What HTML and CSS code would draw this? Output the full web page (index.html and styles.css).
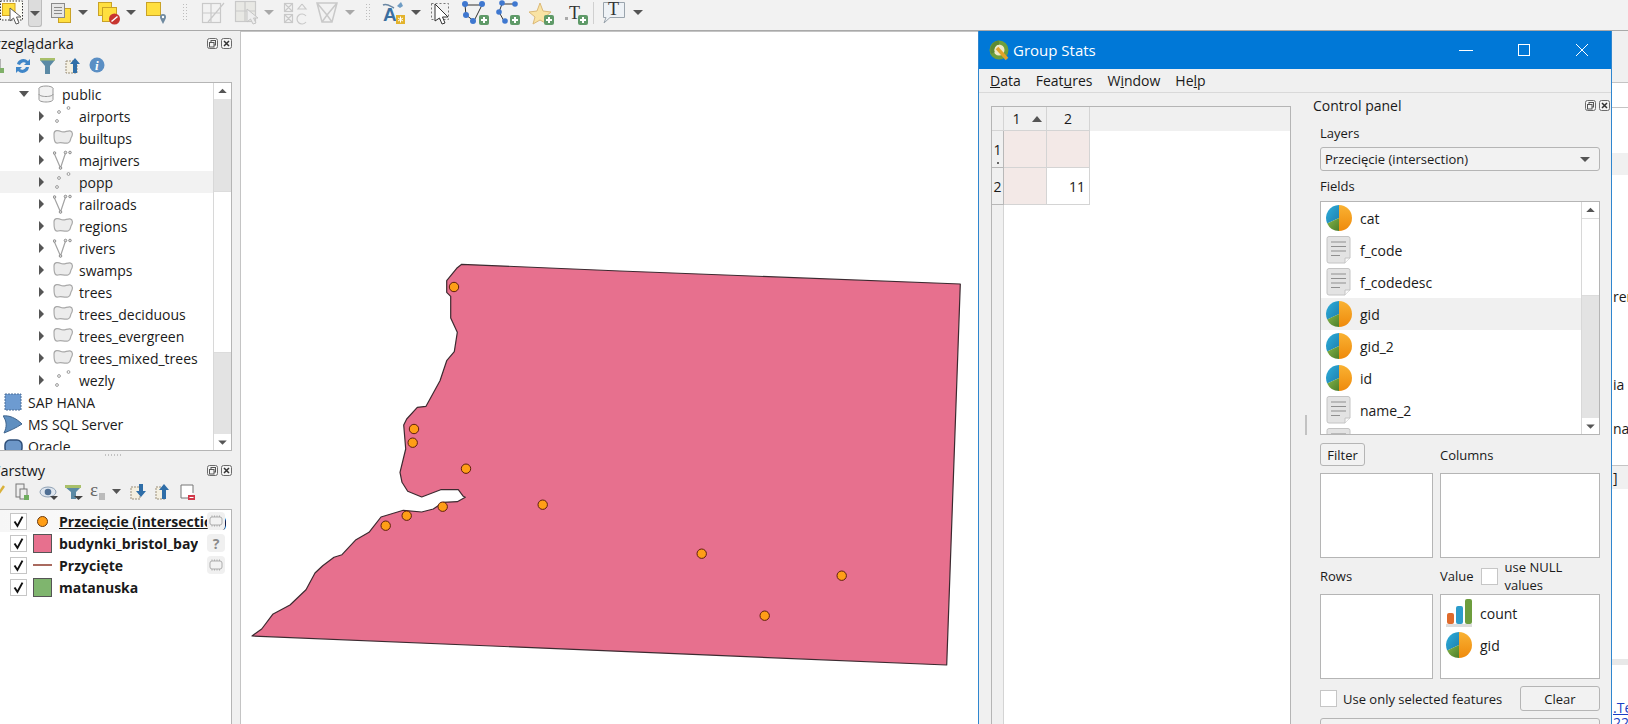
FILE: index.html
```html
<!DOCTYPE html>
<html lang="en">
<head>
    <meta charset="UTF-8">
    <title>QGIS - Group Stats</title>
    <link rel="stylesheet" href="styles.css">
</head>
<body>
<svg class="defs" width="0" height="0">
    <defs>
        <linearGradient id="gOrange" x1="0" y1="0" x2="0" y2="1"><stop offset="0" stop-color="#f9b233"/><stop offset="1" stop-color="#ef8a0c"/></linearGradient>
        <linearGradient id="gBlue" x1="0" y1="0" x2="1" y2="1"><stop offset="0" stop-color="#2db0dd"/><stop offset="1" stop-color="#1f7fae"/></linearGradient>
        <linearGradient id="gGreen" x1="0" y1="0" x2="1" y2="1"><stop offset="0" stop-color="#86b548"/><stop offset="1" stop-color="#4d7f2c"/></linearGradient>
        <symbol id="pie" viewBox="0 0 26 26">
            <path d="M13 13V0A13 13 0 0 1 13 26Z" fill="url(#gOrange)"/>
            <path d="M13 13V0A13 13 0 0 0 1.2 18.4Z" fill="url(#gBlue)"/>
            <path d="M13 13L1.2 18.4A13 13 0 0 0 13 26Z" fill="url(#gGreen)"/>
        </symbol>
        <symbol id="doc" viewBox="0 0 26 28">
            <path d="M3 .5H22a2 2 0 0 1 2 2V22l-5 5H3a2 2 0 0 1-2-2V2.5a2 2 0 0 1 2-2Z" fill="#e3e3e3" stroke="#c4c4c4"/>
            <path d="M19 27v-5h5" fill="#fafafa" stroke="#c4c4c4"/>
            <path d="M5 6H20M5 10.500H20M5 15H20M5 19.500H14" stroke="#8f8f8f" fill="none"/>
        </symbol>
        <symbol id="blob" viewBox="0 0 20 20">
            <path d="M1 6C1 2 5 2 8 3.500C11 5 14 2.500 17 2.800C20 3.500 20 7 18 10C17 12 18 14 15 15C11 16 8 13.500 5 15C1 16 1 10 1 6Z" fill="#ececec" stroke="#a9a9a9" stroke-width="1.200"/>
        </symbol>
        <symbol id="pts" viewBox="0 0 20 20">
            <g fill="#fff" stroke="#9a9a9a" stroke-width="1"><circle cx="15.500" cy="2" r="1.400"/><circle cx="6" cy="6" r="1.400"/><circle cx="4" cy="15" r="1.400"/></g>
        </symbol>
        <symbol id="lin" viewBox="0 0 20 20">
            <path d="M1 3L7.500 18L12.500 3" fill="none" stroke="#a3a3a3" stroke-width="1.200"/>
            <g fill="#ddd" stroke="#8f8f8f"><circle cx="1.500" cy="3" r="1.300"/><circle cx="7.500" cy="18" r="1.300"/><circle cx="12.500" cy="2.500" r="1.300"/><circle cx="17" cy="2.500" r="1.300"/></g>
        </symbol>
        <symbol id="chip" viewBox="0 0 18 18">
            <rect x="3" y="5" width="12" height="8" rx="2" fill="#f2f2f2" stroke="#adadad"/>
            <path d="M5 3.500V5M7.500 3.500V5M10 3.500V5M12.500 3.500V5M5 13V14.500M7.500 13V14.500M10 13V14.500M12.500 13V14.500" stroke="#adadad"/>
        </symbol>
        <symbol id="check" viewBox="0 0 17 17">
            <path d="M4 8.500L7.300 13.500L13 3" fill="none" stroke="#111" stroke-width="2.200"/>
        </symbol>
        <symbol id="floatbtn" viewBox="0 0 11 11">
            <rect x=".5" y=".5" width="10" height="10" rx="2" fill="#f4f4f4" stroke="#6b6b6b"/>
            <rect x="4" y="2.500" width="4.500" height="4.500" fill="none" stroke="#555"/><rect x="2.500" y="4.500" width="4.500" height="4.500" fill="#f4f4f4" stroke="#555"/>
        </symbol>
        <symbol id="closebtn" viewBox="0 0 11 11">
            <rect x=".5" y=".5" width="10" height="10" rx="2" fill="#f4f4f4" stroke="#6b6b6b"/>
            <path d="M3 3L8 8M8 3L3 8" stroke="#333" stroke-width="1.500"/>
        </symbol>
        <symbol id="up" viewBox="0 0 17 17"><path d="M4 10.500H13L8.500 6Z" fill="#555"/></symbol>
        <symbol id="down" viewBox="0 0 17 17"><path d="M4 7H13L8.500 11.500Z" fill="#555"/></symbol>
        <symbol id="plus" viewBox="0 0 10 10"><rect width="10" height="10" rx="2" fill="#5f9a68"/><path d="M5 2V8M2 5H8" stroke="#fff" stroke-width="2"/></symbol>
    </defs>
</svg>

<div class="app">
    <div class="toolbar">
        <svg width="28" height="30" viewBox="0 0 28 30">
            <rect x=".5" y="1" width="22" height="19" fill="#fbfbf4" stroke="#333" stroke-dasharray="1.500 1.500"/>
            <rect x="2.500" y="3.500" width="12.500" height="12" fill="#ffdf3f" stroke="#d3a41f"/>
            <path d="M10 8V21L13.500 18L16 24L19 23L16.500 17L21 17Z" fill="#fff" stroke="#5a5a5a"/>
        </svg>
        <div class="tool-drop"><span class="arrow-down"></span></div>
        <svg width="134" height="30" viewBox="42 0 134 30">
            <rect x="58.500" y="8.500" width="12" height="14" fill="#ffdf3f" stroke="#c9a227"/>
            <rect x="51.500" y="3.500" width="13" height="14" fill="#e6e6e6" stroke="#8a8a8a"/>
            <path d="M54 7.500H62M54 10.500H62M54 13.500H62" stroke="#8a8a8a"/>
            <polygon points="78,10 88,10 83,15" fill="#555"/>
            <rect x="98.500" y="2.500" width="13" height="13" fill="#ffdf3f" stroke="#c9a227"/>
            <rect x="102.500" y="7.500" width="14" height="14" fill="#ffdf3f" stroke="#c9a227"/>
            <circle cx="114.500" cy="19" r="5.500" fill="#c8352f"/>
            <path d="M111.500 21.500L117.500 16.500" stroke="#fff" stroke-width="1.500"/>
            <polygon points="126,10 136,10 131,15" fill="#555"/>
            <rect x="146.500" y="2.500" width="14" height="13" fill="#ffdf3f" stroke="#c9a227"/>
            <path d="M163 24C161 20 160 18.500 160 17A3 3 0 0 1 166 17C166 18.500 165 20 163 24Z" fill="#6f8aa0"/>
            <circle cx="163" cy="17" r="1.200" fill="#fff"/>
        </svg>
        <span class="grip"></span>
        <svg width="166" height="30" viewBox="190 0 166 30">
            <g fill="none" stroke="#c9c9c9" stroke-width="1.200">
                <rect x="196.500" y="3.500" width="18" height="19"/><path d="M196.500 13H214M205 3.500V22M202 22L218 3"/>
                <rect x="229.500" y="1.500" width="20" height="20" fill="#e8e8e4"/><path d="M229.500 11H249M239 1.500V21"/>
                <rect x="278.500" y="3.500" width="8" height="8"/><rect x="278.500" y="14.500" width="8" height="8"/>
                <path d="M279 4L286 11M286 4L279 11M279 15L286 22M286 15L279 22M296 4L292 9H300L296 4M300 16A5 5 0 1 0 300 22"/>
                <path d="M311 3H331L326 22H316ZM311 3L321 15L331 3M316 22L321 15L326 22" stroke-width="1.500"/>
            </g>
            <path d="M241 9V22L244.500 19L247 24L250 23L247.500 18L252 18Z" fill="#eee" stroke="#c4c4c4"/>
            <polygon points="258,10 268,10 263,15" fill="#a8a8a8"/>
            <polygon points="339,10 349,10 344,15" fill="#a8a8a8"/>
        </svg>
        <span class="grip grip-b"></span>
        <svg width="214" height="30" viewBox="370 0 214 30">
            <path d="M377 5C381 3 384 6 388 8" fill="none" stroke="#6b87a3" stroke-width="1.500"/>
            <polygon points="395,2 397,6 394,8 391,6" fill="#6f9cc4"/>
            <text class="tb-a" x="377" y="21">A</text>
            <rect x="390" y="15" width="9" height="9" fill="#e3b32c"/><path d="M394.500 16.500V22.500M392 18L397 21M397 18L392 21" stroke="#fff"/>
            <polygon points="405,10 415,10 410,15" fill="#555"/>
            <rect x="425.500" y="3.500" width="17" height="16" fill="none" stroke="#777" stroke-dasharray="2 2"/>
            <path d="M429 4V21L433.500 18L436 24L439 23L436.500 17L442 17Z" fill="#fff" stroke="#333"/>
            <path d="M459 5H476L468 21L460 15Z" fill="none" stroke="#333" stroke-width="1"/>
            <g fill="#3f78d0"><circle cx="459" cy="4" r="3"/><circle cx="476" cy="4" r="3"/><circle cx="467" cy="21" r="3"/><circle cx="460" cy="15" r="3"/></g>
            <use href="#plus" x="472" y="15" width="12" height="10"/>
            <path d="M496 4H509M496 4L493 12L498 21" fill="none" stroke="#333"/>
            <g fill="#3f78d0"><circle cx="496" cy="3" r="2.800"/><circle cx="509" cy="4" r="2.800"/><circle cx="493" cy="12" r="2.800"/><circle cx="499" cy="21" r="2.800"/></g>
            <use href="#plus" x="504" y="15" width="10" height="10"/>
            <polygon points="534,3 537,11 545,12 539,17 541,24 534,20 527,24 529,17 523,12 531,11" fill="#f9e3a4" stroke="#dcb977"/>
            <use href="#plus" x="538" y="15" width="10" height="10"/>
            <rect x="559" y="17" width="3" height="3" fill="#aaa"/>
            <text class="tb-t" x="563" y="19">T</text>
            <use href="#plus" x="572" y="15" width="10" height="10"/>
        </svg>
        <span class="tb-sep"></span>
        <svg width="50" height="30" viewBox="592 0 50 30">
            <path d="M597.500 2.500H618.500V17.500H604L598 23L600 17.500H597.500Z" fill="#eef2f6" stroke="#9aa4ad"/>
            <text class="tb-t" x="602" y="15">T</text>
            <polygon points="627,10 637,10 632,15" fill="#555"/>
        </svg>
    </div>

    <div class="main">
        <div class="side">
            <div class="dock-title">
                <span class="clip-title browser">Przeglądarka</span>
                <span class="dock-btns"><svg><use href="#floatbtn"/></svg><svg><use href="#closebtn"/></svg></span>
            </div>
            <svg class="dock-tools" width="120" height="22" viewBox="0 55 120 22">
                <path d="M0 60V72H4" fill="none" stroke="#777"/><rect x="0" y="69" width="4" height="5" fill="#7fb069"/>
                <path d="M17 65A6.500 6.500 0 0 1 28 62L30 60V66H24L26 64A4 4 0 0 0 20 66ZM29 68A6.500 6.500 0 0 1 18 72L16 74V68H22L20 70A4 4 0 0 0 26 68Z" fill="#3f86c8"/>
                <path d="M40 59H55V61L50 67V75H45V67L40 61Z" fill="#5b8aa5"/><path d="M40 59H55V61.500H40Z" fill="#a9c06a"/>
                <rect x="66" y="62" width="11" height="12" fill="#f4efe0" stroke="#9a8f7a" stroke-dasharray="2 1"/>
                <path d="M75 59L80 65H77V74H73V65H70Z" fill="#2f6ea8"/>
                <circle cx="97" cy="66" r="7.500" fill="#5b8fc4"/><text class="tb-i" x="95" y="70.500">i</text>
            </svg>
            <div class="panel-box tree-box">
                <div class="tree">
                    <div class="row lvl1"><span class="arrow-open"></span><svg class="db-ico" width="16" height="18" viewBox="0 0 16 18"><ellipse cx="8" cy="3.500" rx="7" ry="2.500" fill="#f2f2f2" stroke="#999"/><path d="M1 3.500V14.500C1 16 4 17 8 17S15 16 15 14.500V3.500M1 9C1 10.500 4 11.500 8 11.500S15 10.500 15 9" fill="#f2f2f2" stroke="#999"/></svg><span>public</span></div>
                    <div class="row lvl2"><span class="arrow-closed"></span><svg class="tree-ico"><use href="#pts"/></svg><span>airports</span></div>
                    <div class="row lvl2"><span class="arrow-closed"></span><svg class="tree-ico"><use href="#blob"/></svg><span>builtups</span></div>
                    <div class="row lvl2"><span class="arrow-closed"></span><svg class="tree-ico"><use href="#lin"/></svg><span>majrivers</span></div>
                    <div class="row lvl2 row-hover"><span class="arrow-closed"></span><svg class="tree-ico"><use href="#pts"/></svg><span>popp</span></div>
                    <div class="row lvl2"><span class="arrow-closed"></span><svg class="tree-ico"><use href="#lin"/></svg><span>railroads</span></div>
                    <div class="row lvl2"><span class="arrow-closed"></span><svg class="tree-ico"><use href="#blob"/></svg><span>regions</span></div>
                    <div class="row lvl2"><span class="arrow-closed"></span><svg class="tree-ico"><use href="#lin"/></svg><span>rivers</span></div>
                    <div class="row lvl2"><span class="arrow-closed"></span><svg class="tree-ico"><use href="#blob"/></svg><span>swamps</span></div>
                    <div class="row lvl2"><span class="arrow-closed"></span><svg class="tree-ico"><use href="#blob"/></svg><span>trees</span></div>
                    <div class="row lvl2"><span class="arrow-closed"></span><svg class="tree-ico"><use href="#blob"/></svg><span>trees_deciduous</span></div>
                    <div class="row lvl2"><span class="arrow-closed"></span><svg class="tree-ico"><use href="#blob"/></svg><span>trees_evergreen</span></div>
                    <div class="row lvl2"><span class="arrow-closed"></span><svg class="tree-ico"><use href="#blob"/></svg><span>trees_mixed_trees</span></div>
                    <div class="row lvl2"><span class="arrow-closed"></span><svg class="tree-ico"><use href="#pts"/></svg><span>wezly</span></div>
                    <div class="row lvl0"><svg class="tree-ico"><rect x="2" y="2" width="16" height="16" fill="#6d9bd1" stroke="#4d6f99" stroke-dasharray="2 1"/></svg><span>SAP HANA</span></div>
                    <div class="row lvl0"><svg class="tree-ico"><path d="M0 2C6 1 13 4 19 10C13 14 6 17 1 19C4 13 4 7 0 2Z" fill="#5f8fc0" stroke="#3f648c"/></svg><span>MS SQL Server</span></div>
                    <div class="row lvl0"><svg class="tree-ico"><rect x="2" y="4" width="17" height="13" rx="5" fill="#6d97c8" stroke="#2f4f78" stroke-width="1.500"/></svg><span>Oracle</span></div>
                </div>
                <div class="sbar">
                    <svg class="sbar-btn"><use href="#up"/></svg>
                    <div class="sbar-groove tree-g1"></div>
                    <div class="sbar-thumb tree-thumb"></div>
                    <div class="sbar-groove tree-g2"></div>
                    <svg class="sbar-btn"><use href="#down"/></svg>
                </div>
            </div>
            <div class="side-split"><span class="dots-h"></span></div>
            <div class="dock-title">
                <span class="clip-title layers">Warstwy</span>
                <span class="dock-btns"><svg><use href="#floatbtn"/></svg><svg><use href="#closebtn"/></svg></span>
            </div>
            <svg class="dock-tools" width="200" height="22" viewBox="0 482 200 22">
                <path d="M-1 494L4 487" stroke="#d9b13a" stroke-width="2.500"/>
                <rect x="16" y="485" width="8" height="13" fill="#eee" stroke="#777"/><rect x="20" y="490" width="7" height="10" fill="#eee" stroke="#777"/><rect x="24" y="496" width="5" height="5" fill="#6fae5f"/>
                <ellipse cx="48" cy="493" rx="8" ry="5" fill="#dfe6ee" stroke="#8ea0b4"/><circle cx="48" cy="493" r="3.300" fill="#4f6f94"/><polygon points="50,497 58,497 54,501" fill="#444"/>
                <path d="M65 486H81V488L76 493V500H71V493L65 488Z" fill="#5b8aa5"/><path d="M65 486H81V489H65Z" fill="#a9c06a"/><polygon points="74,497 83,497 78.500,501" fill="#444"/>
                <text class="tb-e" x="90" y="497">ε</text><rect x="99" y="494" width="6" height="7" fill="#bbb"/>
                <polygon points="112,490 121,490 116.500,495" fill="#555"/>
                <rect x="131" y="488" width="9" height="12" fill="#f4efe0" stroke="#9a8f7a" stroke-dasharray="2 1"/><path d="M141 498L146 492H143V485H139V492H136Z" fill="#2f6ea8"/>
                <rect x="156" y="488" width="9" height="12" fill="#f4efe0" stroke="#9a8f7a" stroke-dasharray="2 1"/><path d="M164 485L169 491H166V500H162V491H159Z" fill="#2f6ea8"/>
                <path d="M189 499H181V486H193V494" fill="#fff" stroke="#777"/><rect x="188" y="496" width="7" height="5" fill="#d2394a"/><path d="M189.500 498.500H193.500" stroke="#fff"/>
            </svg>
            <div class="panel-box layer-box">
                <div class="layer-row layer-sel">
                    <span class="check"><svg><use href="#check"/></svg></span>
                    <span class="sym"><span class="sym-point"></span></span>
                    <span class="layer-name layer-active">Przecięcie (intersection)</span>
                    <span class="badge"><svg><use href="#chip"/></svg></span>
                </div>
                <div class="layer-row">
                    <span class="check"><svg><use href="#check"/></svg></span>
                    <span class="sym"><span class="sym-fill sym-pink"></span></span>
                    <span class="layer-name">budynki_bristol_bay</span>
                    <span class="badge badge-q">?</span>
                </div>
                <div class="layer-row">
                    <span class="check"><svg><use href="#check"/></svg></span>
                    <span class="sym"><span class="sym-line"></span></span>
                    <span class="layer-name">Przycięte</span>
                    <span class="badge"><svg><use href="#chip"/></svg></span>
                </div>
                <div class="layer-row">
                    <span class="check"><svg><use href="#check"/></svg></span>
                    <span class="sym"><span class="sym-fill sym-green"></span></span>
                    <span class="layer-name">matanuska</span>
                </div>
            </div>
        </div>

        <div class="map">
            <svg class="map-svg" width="737" height="691" viewBox="241 33 737 691">
                <polygon class="region" points="461.700,265.300 620,272 960.300,285 946.700,666 252,637 261.700,630 272.700,615.300 290,606 306,590.700 315,574 322.700,566.700 334,558.300 342,555.700 356,540.700 369,533.300 381,518 403.300,511.300 421.700,513 433.300,510 443.300,503.300 457.300,502.700 465.300,498.300 463.300,497.300 458.300,490.700 440.700,490.700 421.700,498 407.700,492.300 402,483.300 400,473.300 405.700,450 403.700,426 406.700,420 417.300,408.300 426,407.300 440,381.700 446.700,361.700 454.300,352.700 457.300,333.300 450.700,319 450.700,297.300 446.700,293.300 446.700,281.700 456.700,269.300"/>
                <g class="pts">
                    <circle cx="454" cy="288" r="4.700"/>
                    <circle cx="414" cy="430" r="4.700"/>
                    <circle cx="412.700" cy="443.700" r="4.700"/>
                    <circle cx="466" cy="469.700" r="4.700"/>
                    <circle cx="442.700" cy="507.700" r="4.700"/>
                    <circle cx="406.700" cy="516.700" r="4.700"/>
                    <circle cx="385.700" cy="526.700" r="4.700"/>
                    <circle cx="542.700" cy="505.700" r="4.700"/>
                    <circle cx="701.700" cy="554.700" r="4.700"/>
                    <circle cx="841.700" cy="576.700" r="4.700"/>
                    <circle cx="764.700" cy="616.700" r="4.700"/>
                </g>
            </svg>
        </div>
    </div>

    <!-- window behind Group Stats, only its left edge shows -->
    <div class="behind">
        <div class="behind-top"></div>
        <div class="behind-gap1"></div>
        <div class="behind-band"></div>
        <div class="behind-text t-ren">ren</div>
        <div class="behind-text t-ia">ia</div>
        <div class="behind-text t-na">na</div>
        <div class="behind-head">]</div>
        <div class="behind-band2"></div>
        <a class="behind-link">.Te</a>
        <a class="behind-link">22:</a>
    </div>

    <div class="win">
        <div class="win-title">
            <svg class="q-logo" width="21" height="21" viewBox="0 0 21 21">
                <circle cx="10" cy="10" r="7.500" fill="#eee9c8" stroke="#6f9f3a" stroke-width="4"/>
                <path d="M8 8L18 19" stroke="#e0a32a" stroke-width="3.500"/>
                <path d="M4 13A7.500 7.500 0 0 1 10 2.500" fill="none" stroke="#5d8a34" stroke-width="4"/>
            </svg>
            <span class="win-name">Group Stats</span>
            <span class="win-btn"><svg width="14" height="14" viewBox="0 0 14 14"><path d="M0 7.500H14" stroke="#fff"/></svg></span>
            <span class="win-btn"><svg width="14" height="14" viewBox="0 0 14 14"><rect x="1.500" y="1.500" width="11" height="11" fill="none" stroke="#fff"/></svg></span>
            <span class="win-btn"><svg width="14" height="14" viewBox="0 0 14 14"><path d="M1 1L13 13M13 1L1 13" stroke="#fff"/></svg></span>
        </div>
        <div class="win-menu">
            <span><u>D</u>ata</span>
            <span>Feat<u>u</u>res</span>
            <span>W<u>i</u>ndow</span>
            <span>He<u>l</u>p</span>
        </div>
        <div class="win-body">
            <div class="table">
                <div class="th corner"></div>
                <div class="th th-sort">1<svg class="sort" width="10" height="6" viewBox="0 0 10 6"><path d="M0 6H10L5 0Z" fill="#555"/></svg></div>
                <div class="th">2</div>
                <div class="th th-fill"></div>
                <div class="rh">1<span class="rh-mark"></span></div>
                <div class="td td-pink"></div>
                <div class="td td-pink"></div>
                <div class="td-blank"></div>
                <div class="rh">2</div>
                <div class="td td-pink"></div>
                <div class="td">11</div>
                <div class="td-blank"></div>
                <div class="rh-rest"></div>
                <div class="td-rest"></div>
            </div>
            <div class="win-split"><span class="dots-v"></span></div>
            <div class="control">
                <div class="control-head">
                    <span>Control panel</span>
                    <span class="dock-btns"><svg><use href="#floatbtn"/></svg><svg><use href="#closebtn"/></svg></span>
                </div>
                <div class="form">
                    <div class="lbl lbl-layers">Layers</div>
                    <div class="combo"><span>Przecięcie (intersection)</span><span class="arrow-down"></span></div>
                    <div class="lbl lbl-fields">Fields</div>
                    <div class="fields">
                        <div class="field-list">
                            <div class="field"><svg class="field-ico"><use href="#pie"/></svg>cat</div>
                            <div class="field"><svg class="field-ico"><use href="#doc"/></svg>f_code</div>
                            <div class="field"><svg class="field-ico"><use href="#doc"/></svg>f_codedesc</div>
                            <div class="field field-hover"><svg class="field-ico"><use href="#pie"/></svg>gid</div>
                            <div class="field"><svg class="field-ico"><use href="#pie"/></svg>gid_2</div>
                            <div class="field"><svg class="field-ico"><use href="#pie"/></svg>id</div>
                            <div class="field"><svg class="field-ico"><use href="#doc"/></svg>name_2</div>
                            <div class="field"><svg class="field-ico"><use href="#doc"/></svg>name_3</div>
                        </div>
                        <div class="sbar">
                            <svg class="sbar-btn"><use href="#up"/></svg>
                            <div class="sbar-thumb field-thumb"></div>
                            <div class="sbar-groove field-g"></div>
                            <svg class="sbar-btn"><use href="#down"/></svg>
                        </div>
                    </div>
                    <div class="pivot">
                        <div class="pivot-head"><span class="btn-filter">Filter</span></div>
                        <div class="pivot-head"><span>Columns</span></div>
                        <div class="dropbox"></div>
                        <div class="dropbox"></div>
                        <div class="pivot-head pivot-mid"><span>Rows</span></div>
                        <div class="pivot-head pivot-mid value-head"><span>Value</span><span class="box-check"></span><span>use NULL values</span></div>
                        <div class="dropbox"></div>
                        <div class="dropbox value-box">
                            <div class="value-item">
                                <svg width="26" height="28" viewBox="0 0 26 28"><rect y="25" width="26" height="3" fill="#ddd"/><rect x="1" y="14" width="7" height="11" rx="2" fill="#df6a2b"/><rect x="10" y="7" width="7" height="18" rx="2" fill="#2c9ccb"/><rect x="19" y="0" width="7" height="25" rx="2" fill="#6d9d3e"/></svg>
                                count
                            </div>
                            <div class="value-item"><svg width="26" height="26"><use href="#pie"/></svg>gid</div>
                        </div>
                    </div>
                    <div class="bottom-row">
                        <span class="box-check"></span>
                        <span class="only-sel">Use only selected features</span>
                        <span class="btn-clear">Clear</span>
                    </div>
                    <div class="combo combo-last"></div>
                </div>
            </div>
        </div>
    </div>
</div>
</body>
</html>
```

FILE: styles.css
```css
html, body {
    margin: 0;
    padding: 0;
    overflow: hidden;
}
body {
    font-family: "Open Sans", sans-serif;
    font-size: 14px;
    color: #1a1a1a;
    background-color: #f0f0f0;
}
.defs {
    display: block;
}
.app {
    position: relative;
    width: 1628px;
    height: 724px;
    overflow: hidden;
    display: flex;
    flex-direction: column;
}

/* main toolbar */
.toolbar {
    height: 30px;
    flex: none;
    display: flex;
    align-items: flex-start;
    border-bottom: 1px solid #a9a9a9;
    background-color: #f2f2f2;
}
.toolbar svg {
    display: block;
    flex: none;
}
.tool-drop {
    width: 14px;
    height: 27px;
    box-sizing: border-box;
    background-color: #dcdcdc;
    border: 1px solid #bcbcbc;
    border-top: none;
    border-radius: 0 0 3px 3px;
    display: flex;
    align-items: center;
    justify-content: center;
}
.arrow-down {
    width: 0;
    height: 0;
    border-left: 5px solid transparent;
    border-right: 5px solid transparent;
    border-top: 5px solid #555;
}
.grip {
    width: 5px;
    height: 19px;
    margin: 3px 9px 0 6px;
    background-image: radial-gradient(#bdbdbd 1px, transparent 1px);
    background-size: 3px 3px;
}
.grip-b {
    margin: 3px 6px 0 3px;
}
.tb-sep {
    width: 1px;
    height: 22px;
    margin: 2px 4px 0 3px;
    background-color: #d0d0d0;
}
.tb-a {
    font-family: "Liberation Sans", sans-serif;
    font-weight: bold;
    font-size: 19px;
    fill: #3c6f9f;
}
.tb-t {
    font-family: "Liberation Serif", serif;
    font-size: 18px;
    fill: #333;
}
.tb-i {
    font-family: "Liberation Serif", serif;
    font-style: italic;
    font-weight: bold;
    font-size: 13px;
    fill: #fff;
}
.tb-e {
    font-family: "Liberation Serif", serif;
    font-size: 19px;
    fill: #666;
}

.main {
    flex: 1;
    display: flex;
    min-height: 0;
}

/* left docks */
.side {
    width: 240px;
    flex: none;
    box-sizing: content-box;
    border-right: 1px solid #c4c4c4;
    padding-top: 1px;
    display: flex;
    flex-direction: column;
    background-color: #f0f0f0;
}
.dock-title {
    height: 22px;
    flex: none;
    display: flex;
    align-items: center;
    justify-content: space-between;
    padding-right: 8px;
    font-size: 14.500px;
}
.clip-title.browser {
    margin-left: -14px;
}
.clip-title.layers {
    margin-left: -13px;
}
.dock-btns {
    display: flex;
    gap: 3px;
}
.dock-btns svg {
    width: 11px;
    height: 11px;
    display: block;
}
.dock-tools {
    flex: none;
    display: block;
    margin-bottom: 6px;
}
.panel-box {
    background-color: #fff;
    border: 1px solid #b5b5b5;
    margin-left: -1px;
    margin-right: 8px;
    display: flex;
}
.tree-box {
    height: 367px;
    flex: none;
    overflow: hidden;
}
.tree {
    flex: 1;
    min-width: 0;
    overflow: hidden;
}
.row {
    height: 22px;
    display: flex;
    align-items: center;
    white-space: nowrap;
}
.row-hover {
    background-color: #f2f2f2;
}
.lvl0 {
    padding-left: 3px;
}
.lvl0 .tree-ico {
    margin-right: 5px;
}
.lvl1 {
    padding-left: 19px;
}
.lvl2 {
    padding-left: 39px;
}
.arrow-open {
    width: 0;
    height: 0;
    border-left: 5px solid transparent;
    border-right: 5px solid transparent;
    border-top: 6px solid #555;
    margin-right: 9px;
}
.arrow-closed {
    width: 0;
    height: 0;
    border-top: 5px solid transparent;
    border-bottom: 5px solid transparent;
    border-left: 5px solid #555;
    margin-right: 9px;
}
.db-ico {
    margin-right: 8px;
    flex: none;
}
.tree-ico {
    width: 20px;
    height: 20px;
    margin-right: 6px;
    flex: none;
}

/* scrollbars */
.sbar {
    width: 17px;
    flex: none;
    display: flex;
    flex-direction: column;
    border-left: 1px solid #d8d8d8;
    background-color: #fff;
}
.sbar-btn {
    width: 17px;
    height: 16px;
    display: block;
    flex: none;
}
.sbar-groove {
    background-color: #e3e3e3;
}
.sbar-thumb {
    background-color: #fff;
    border-top: 1px solid #dcdcdc;
    border-bottom: 1px solid #dcdcdc;
    box-sizing: border-box;
}
.tree-g1 {
    height: 92px;
}
.tree-thumb {
    height: 162px;
}
.tree-g2 {
    height: 81px;
}
.field-thumb {
    height: 78px;
}
.field-g {
    height: 123px;
}

.side-split {
    height: 8px;
    flex: none;
    display: flex;
    justify-content: center;
    align-items: center;
    padding-right: 14px;
}
.dots-h {
    width: 18px;
    height: 2px;
    background-image: radial-gradient(#c2c2c2 1px, transparent 1px);
    background-size: 3px 2px;
}
.layer-box {
    flex: 1;
    flex-direction: column;
    padding-top: 0;
    border-bottom: none;
}
.layer-row {
    height: 22px;
    flex: none;
    display: flex;
    align-items: center;
    position: relative;
    font-weight: bold;
    white-space: nowrap;
}
.layer-sel {
    background: linear-gradient(90deg, #f6f6f6, #fff);
}
.check {
    width: 17px;
    height: 17px;
    box-sizing: border-box;
    margin-left: 10px;
    background-color: #fff;
    border: 1px solid #c6c6c6;
    flex: none;
}
.check svg {
    width: 15px;
    height: 15px;
    display: block;
}
.sym {
    width: 19px;
    height: 19px;
    margin-left: 6px;
    margin-right: 7px;
    display: flex;
    align-items: center;
    justify-content: center;
    flex: none;
}
.sym-point {
    width: 9px;
    height: 9px;
    border-radius: 50%;
    background-color: #ff9e17;
    border: 1px solid #6b3a10;
}
.sym-fill {
    width: 19px;
    height: 19px;
    box-sizing: border-box;
    border: 1px solid #555;
}
.sym-pink {
    background-color: #e7708e;
}
.sym-green {
    background-color: #7fb56e;
}
.sym-line {
    width: 19px;
    height: 2px;
    background-color: #a96a5f;
}
.layer-name {
    max-width: 167px;
    overflow: hidden;
}
.layer-active {
    text-decoration: underline;
}
.badge {
    position: absolute;
    left: 207px;
    top: 2px;
    width: 18px;
    height: 18px;
    background-color: #f0f0f0;
    border-radius: 4px;
    display: flex;
    align-items: center;
    justify-content: center;
    color: #8a8a8a;
}
.badge svg {
    width: 18px;
    height: 18px;
}

/* map canvas */
.map {
    flex: 1;
    background-color: #fff;
    border-top: 1px solid #c4c4c4;
    overflow: hidden;
}
.map-svg {
    display: block;
}
.region {
    fill: #e7708e;
    stroke: #3c2a30;
    stroke-width: 1.200;
    stroke-linejoin: round;
}
.pts circle {
    fill: #ff9e17;
    stroke: #5e1f0c;
    stroke-width: 1;
}

/* other window behind */
.behind {
    position: absolute;
    left: 1611px;
    top: 31px;
    width: 17px;
    height: 693px;
    background-color: #fff;
    padding-left: 2px;
    box-sizing: border-box;
    overflow: hidden;
    white-space: nowrap;
}
.behind > div, .behind > a {
    margin-left: -2px;
    padding-left: 2px;
}
.behind-top {
    height: 51px;
    background-color: #f0f0f0;
    border-bottom: 1px solid #c4c4c4;
}
.behind-gap1 {
    height: 24px;
    border-bottom: 1px solid #c4c4c4;
}
.behind-band {
    height: 22px;
    margin-top: 45px;
    background-color: #f0f0f0;
}
.behind-text {
    height: 20px;
    line-height: 20px;
}
.t-ren {
    margin-top: 112px;
}
.t-ia {
    margin-top: 68px;
}
.t-na {
    margin-top: 24px;
}
.behind-head {
    height: 23px;
    margin-top: 26px;
    line-height: 23px;
    background-color: #f0f0f0;
    border-top: 1px solid #c4c4c4;
}
.behind-band2 {
    height: 6px;
    margin-top: 170px;
    background-color: #e8e8e8;
}
.behind-link {
    display: block;
    margin-top: 35px;
    height: 15px;
    line-height: 15px;
    color: #1a3fc4;
    text-decoration: underline;
}
.behind-link + .behind-link {
    margin-top: 0;
}

/* Group Stats window */
.win {
    position: absolute;
    left: 978px;
    top: 31px;
    width: 634px;
    height: 693px;
    box-sizing: border-box;
    border-left: 1px solid #2f86cf;
    border-right: 1px solid #2f86cf;
    background-color: #f0f0f0;
    display: flex;
    flex-direction: column;
}
.win-title {
    height: 38px;
    flex: none;
    display: flex;
    align-items: center;
    background-color: #0078d7;
    color: #fff;
    padding-left: 10px;
}
.q-logo {
    flex: none;
    margin-right: 3px;
}
.win-name {
    flex: 1;
    font-size: 15px;
}
.win-btn {
    width: 58px;
    display: flex;
    justify-content: center;
}
.win-menu {
    height: 24px;
    flex: none;
    box-sizing: border-box;
    border-bottom: 1px solid #d9d9d9;
    padding-left: 11px;
    display: flex;
    align-items: center;
    gap: 15px;
}
.win-body {
    flex: 1;
    display: flex;
    min-height: 0;
}
.table {
    width: 300px;
    flex: none;
    box-sizing: border-box;
    margin: 13px 0 -2px 12px;
    border: 1px solid #b5b5b5;
    background-color: #fff;
    display: grid;
    grid-template-columns: 12px 43px 43px 1fr;
    grid-template-rows: 24px 37px 37px 1fr;
}
.th {
    background-color: #f0f0f0;
    border-right: 1px solid #d4d4d4;
    border-bottom: 1px solid #d4d4d4;
    display: flex;
    align-items: center;
    justify-content: center;
}
.th-sort {
    gap: 11px;
    padding-left: 4px;
}
.th-fill {
    border: none;
}
.corner {
    border-bottom: 1px solid #d4d4d4;
}
.rh {
    background-color: #f0f0f0;
    border-right: 1px solid #b8b8b8;
    border-bottom: 1px solid #b8b8b8;
    display: flex;
    align-items: center;
    justify-content: center;
    position: relative;
}
.rh-mark {
    position: absolute;
    left: 5px;
    bottom: 3px;
    width: 2px;
    height: 2px;
    background-color: #666;
}
.td {
    border-right: 1px solid #d4d4d4;
    border-bottom: 1px solid #d4d4d4;
    display: flex;
    align-items: center;
    justify-content: flex-end;
    padding-right: 4px;
}
.td-pink {
    background-color: #f3e9e7;
}
.rh-rest {
    background-color: #f0f0f0;
    border-right: 1px solid #d4d4d4;
}
.td-rest {
    grid-column: 2 / 5;
}
.win-split {
    width: 22px;
    flex: none;
    display: flex;
    justify-content: flex-end;
    padding-right: 6px;
    box-sizing: border-box;
}
.dots-v {
    width: 2px;
    height: 20px;
    margin-top: 322px;
    background-image: radial-gradient(#c2c2c2 1px, transparent 1px);
    background-size: 2px 3px;
}
.control {
    flex: 1;
    min-width: 0;
    padding-right: 11px;
}
.control-head {
    height: 24px;
    display: flex;
    align-items: center;
    justify-content: space-between;
    margin-right: -11px;
    padding-right: 1px;
}
.form {
    padding-left: 7px;
    font-size: 13px;
}
.lbl {
    height: 20px;
    line-height: 20px;
}
.lbl-layers {
    margin-top: 6px;
}
.lbl-fields {
    margin-top: 5px;
}
.combo {
    height: 24px;
    box-sizing: border-box;
    margin-top: 4px;
    border: 1px solid #b5b5b5;
    border-radius: 3px;
    background-color: #f2f2f2;
    display: flex;
    align-items: center;
    justify-content: space-between;
    padding: 0 9px 0 4px;
}
.fields {
    height: 234px;
    box-sizing: border-box;
    margin-top: 5px;
    border: 1px solid #b5b5b5;
    background-color: #fff;
    display: flex;
    overflow: hidden;
    font-size: 14px;
}
.field-list {
    flex: 1;
    min-width: 0;
}
.field {
    height: 32px;
    display: flex;
    align-items: center;
    padding-left: 5px;
}
.field-hover {
    background-color: #f0f0f0;
}
.field-ico {
    width: 26px;
    height: 28px;
    margin-right: 8px;
    flex: none;
}
.pivot {
    display: grid;
    grid-template-columns: 113px 160px;
    column-gap: 7px;
    margin-top: 8px;
}
.pivot-head {
    height: 23px;
    display: flex;
    align-items: center;
}
.pivot-mid {
    height: 20px;
    margin-top: 8px;
}
.value-head {
    gap: 7px;
}
.btn-filter {
    width: 45px;
    height: 23px;
    box-sizing: border-box;
    border: 1px solid #b5b5b5;
    border-radius: 3px;
    background-color: #f2f2f2;
    display: flex;
    align-items: center;
    justify-content: center;
}
.dropbox {
    height: 85px;
    box-sizing: border-box;
    margin-top: 7px;
    border: 1px solid #b5b5b5;
    background-color: #fff;
}
.pivot-mid + .dropbox {
    margin-top: 8px;
}
.value-box {
    margin-top: 8px;
    padding: 2px 0 0 5px;
    font-size: 14px;
}
.value-item {
    height: 32px;
    display: flex;
    align-items: center;
    gap: 8px;
}
.box-check {
    width: 17px;
    height: 17px;
    box-sizing: border-box;
    flex: none;
    background-color: #fff;
    border: 1px solid #c6c6c6;
}
.bottom-row {
    margin-top: 7px;
    height: 25px;
    display: flex;
    align-items: center;
}
.only-sel {
    flex: 1;
    margin-left: 6px;
}
.btn-clear {
    width: 80px;
    height: 25px;
    box-sizing: border-box;
    border: 1px solid #b5b5b5;
    border-radius: 3px;
    background-color: #f2f2f2;
    display: flex;
    align-items: center;
    justify-content: center;
}
.combo-last {
    margin-top: 7px;
}
```
